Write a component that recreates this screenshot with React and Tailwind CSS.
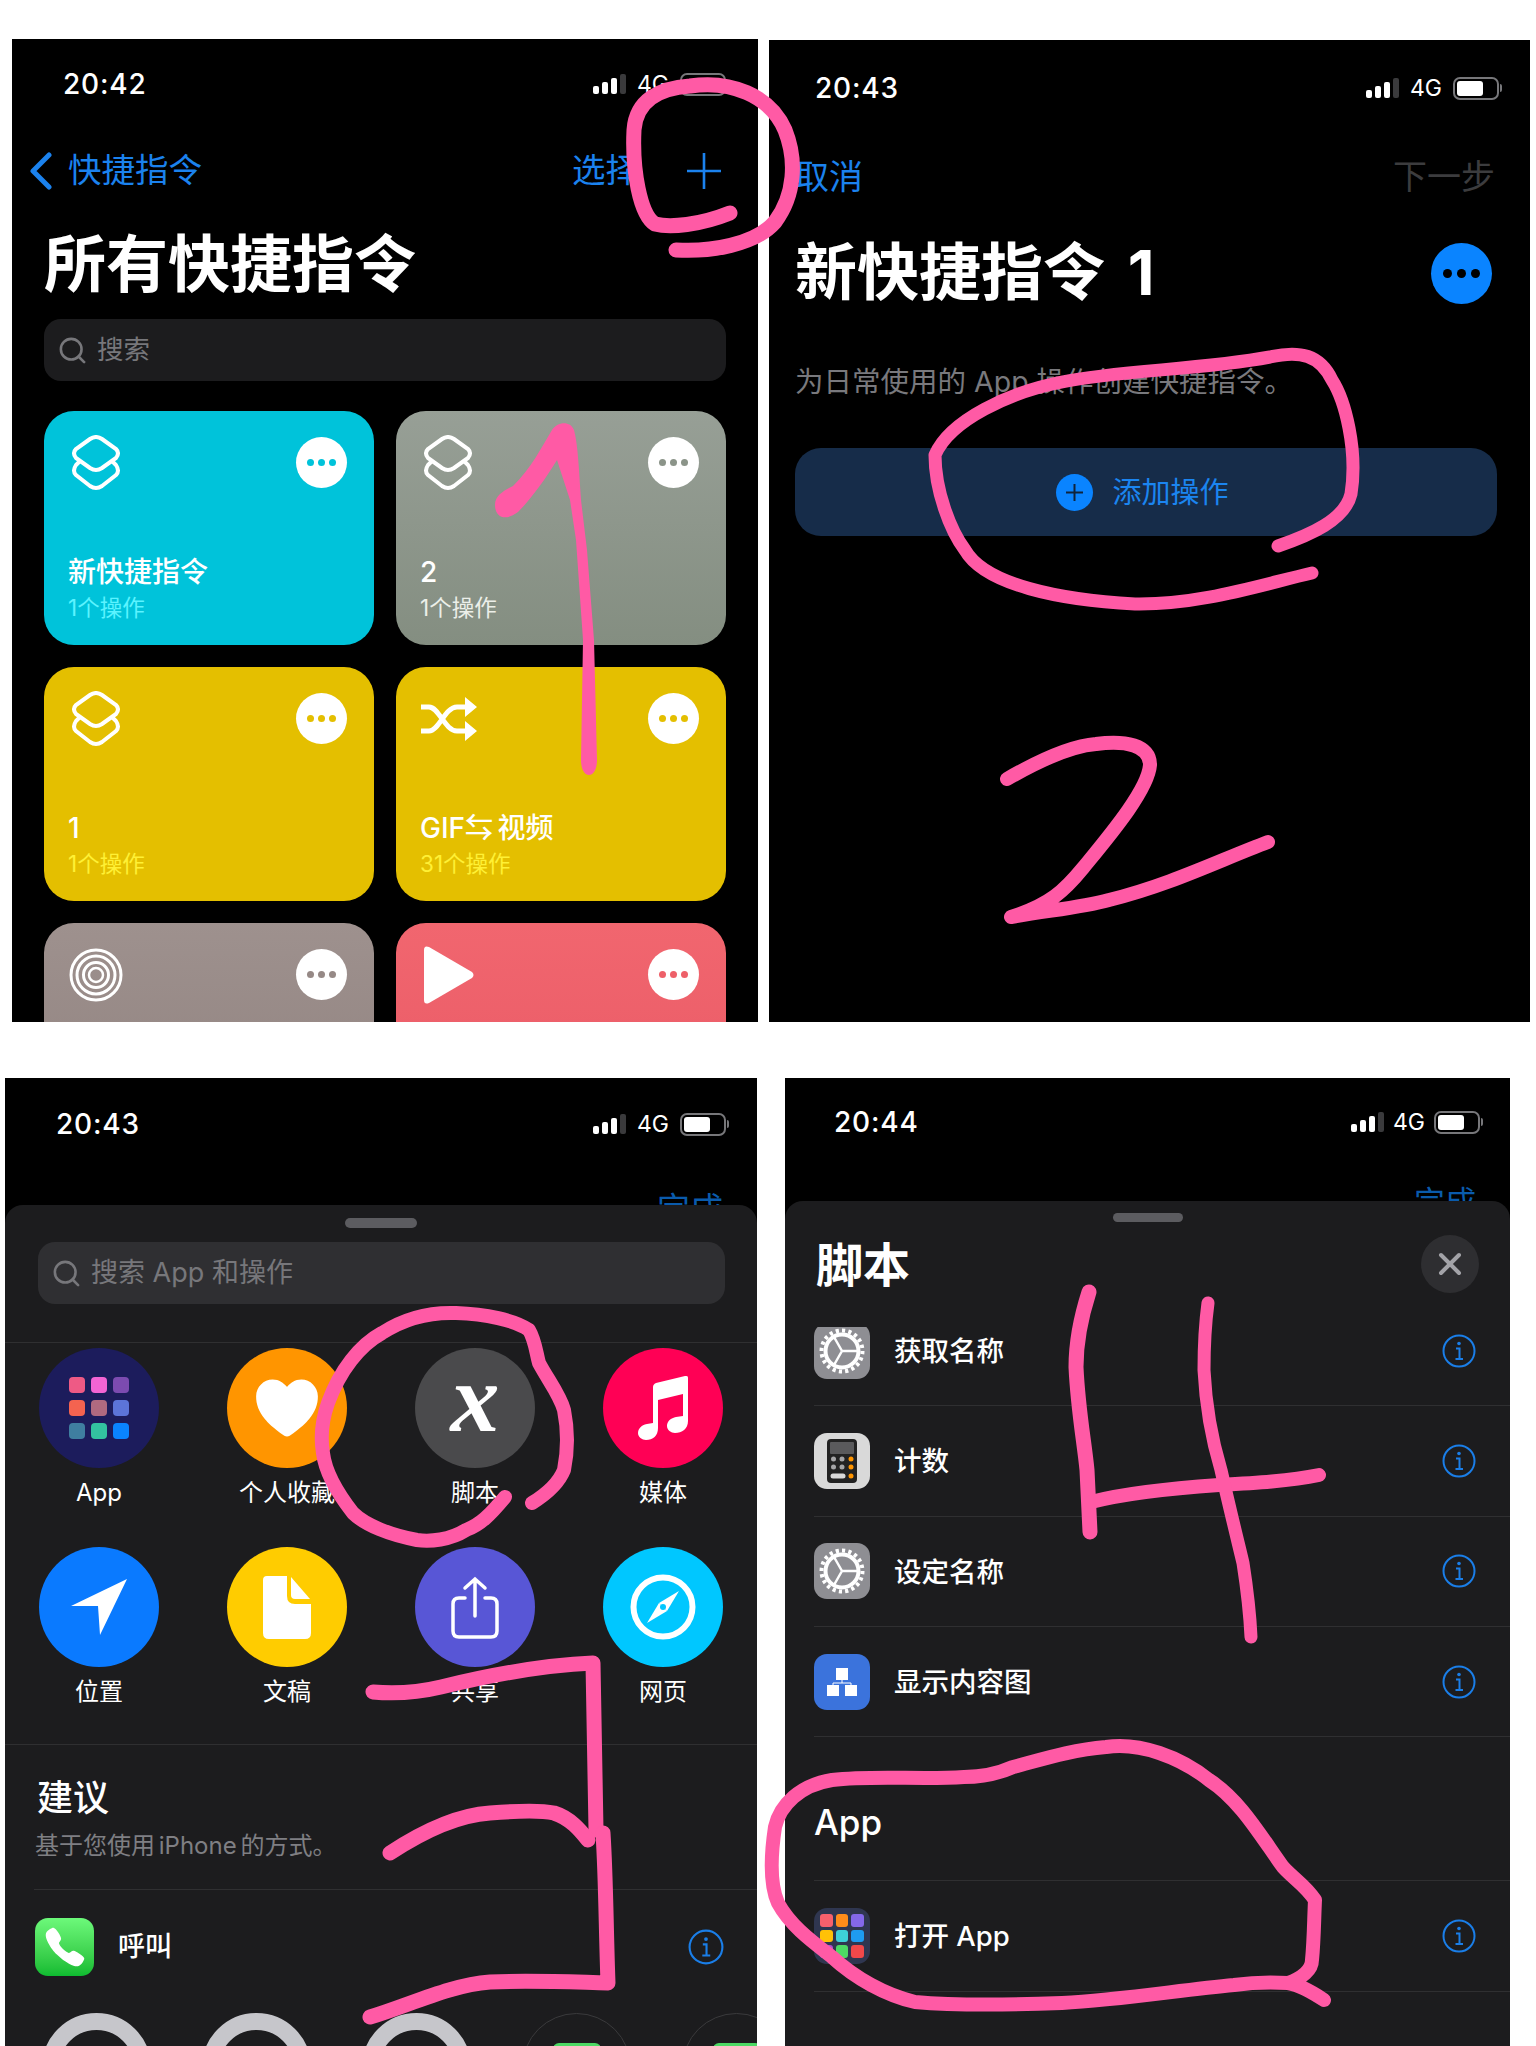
import React from "react";
import { Search } from "lucide-react";
import { IoCall, IoHeart } from "react-icons/io5";

const appGrid = [
  "bg-[#ee5a85]", "bg-[#f264d4]", "bg-[#7c4bb0]",
  "bg-[#f46350]", "bg-[#b06a80]", "bg-[#5c74d8]",
  "bg-[#3f7ea0]", "bg-[#33c3a0]", "bg-[#0a84ff]",
];
const openAppGrid = [
  "bg-[#f8606c]", "bg-[#ff8c1a]", "bg-[#8468ea]",
  "bg-[#ffc107]", "bg-[#3dd0d8]", "bg-[#1e9bf0]",
  "bg-[#b04fd0]", "bg-[#4cd964]", "bg-[#f0484a]",
];

function StatusBar({ time, className, battery = true, gap = "gap-[11px]" }) {
  return (
    <div className={`flex items-center justify-between text-white ${className}`}>
      <span className="text-[28px] leading-none font-medium tracking-[0.8px]">{time}</span>
      <div className={`flex items-center ${gap}`}>
        <div className="flex items-end gap-[3px]">
          <div className="w-[6px] h-[8px] rounded-[2px] bg-white" />
          <div className="w-[6px] h-[12px] rounded-[2px] bg-white" />
          <div className="w-[6px] h-[16px] rounded-[2px] bg-white" />
          <div className="w-[6px] h-[20px] rounded-[2px] bg-[#3a3a3c]" />
        </div>
        <span className="text-[23px] leading-none w-[32px]">4G</span>
        <div className="flex items-center gap-[1px]">
          <div className="w-[46px] h-[23px] rounded-[7px] border-2 border-[#77777a] p-[2px]">
            {battery && <div className="w-[26px] h-full rounded-[3px] bg-white" />}
          </div>
          <div className="w-[2px] h-[8px] rounded-r-[2px] bg-[#77777a]" />
        </div>
      </div>
    </div>
  );
}

function ShortcutGlyph() {
  return (
    <svg width="50" height="56" viewBox="0 0 50 56" fill="none" stroke="white" strokeWidth="4">
      <path d="M19 4 Q25 0 31 4 L45 14 Q49 18 45 23 L31 33 Q25 37 19 33 L5 23 Q1 18 5 14 Z" />
      <path d="M9 26 L5 30 Q1 36 5 40 L19 51 Q25 55 31 51 L45 40 Q49 36 45 30 L41 26" />
    </svg>
  );
}

function ShuffleGlyph() {
  return (
    <svg className="-ml-[2px]" width="56" height="44" viewBox="0 0 56 44" fill="white" stroke="none">
      <path d="M0 10 H8 C18 10 24 34 36 34 H46 M0 34 H8 C18 34 24 10 36 10 H46" fill="none" stroke="white" strokeWidth="5" />
      <path d="M44 0 L56 10 L44 20 Z M44 24 L56 34 L44 44 Z" />
    </svg>
  );
}

function RingsGlyph() {
  return (
    <svg className="-ml-[2px]" width="54" height="54" viewBox="0 0 54 54" fill="none" stroke="white">
      <circle cx="27" cy="27" r="25" strokeWidth="3" />
      <circle cx="27" cy="27" r="19" strokeWidth="3" />
      <circle cx="27" cy="27" r="12.5" strokeWidth="3" />
      <circle cx="27" cy="27" r="7" strokeWidth="2.5" />
    </svg>
  );
}

function PlayGlyph() {
  return (
    <svg width="52" height="58" viewBox="0 0 52 58" fill="white">
      <path d="M1 4 Q1 -1 6 1 L49 26 Q52 29 49 32 L6 57 Q1 59 1 54 Z" />
    </svg>
  );
}

function Dots({ dot }) {
  return (
    <div className="w-[51px] h-[51px] rounded-full bg-white flex items-center justify-center gap-[4px]">
      <div className={`w-[7px] h-[7px] rounded-full ${dot}`} />
      <div className={`w-[7px] h-[7px] rounded-full ${dot}`} />
      <div className={`w-[7px] h-[7px] rounded-full ${dot}`} />
    </div>
  );
}

function Card({ bg, dot, glyph, title, sub, subColor }) {
  return (
    <div className={`h-[234px] rounded-[30px] overflow-hidden ${bg}`}>
      <div className="flex items-center justify-between h-[51px] mt-[26px] pl-[27px] pr-[27px]">
        {glyph}
        <Dots dot={dot} />
      </div>
      <div className="mt-[66px] pl-[24px] h-[36px] flex items-center text-white text-[28px] font-medium leading-none [word-spacing:-3px]">{title}</div>
      <div className={`pl-[24px] h-[36px] flex items-center text-[22.5px] leading-none ${subColor}`}>{sub}</div>
    </div>
  );
}

function PanelOne() {
  return (
    <div className="w-[746px] h-[983px] bg-black overflow-hidden shrink-0">
      <StatusBar time="20:42" battery={false} className="h-[90px] pl-[51px] pr-[29px]" />
      <div className="flex items-center h-[50px] mt-[17px] pl-[17px] text-[33.5px] leading-none text-[#1b82ee]">
        <svg width="24" height="38" viewBox="0 0 24 38" fill="none" stroke="#1b82ee" strokeWidth="5" strokeLinecap="round" strokeLinejoin="round">
          <path d="M20 3 L4 19 L20 35" />
        </svg>
        <span className="ml-[15px]">快捷指令</span>
        <span className="ml-auto">选择</span>
        <svg className="ml-[48px] mr-[37px]" width="34" height="36" viewBox="0 0 34 36" fill="none" stroke="#1b82ee" strokeWidth="2.6">
          <path d="M17 0 V36 M0 18 H34" />
        </svg>
      </div>
      <div className="h-[80px] mt-[29px] pl-[32px] flex items-center text-white text-[62px] font-bold leading-none">所有快捷指令</div>
      <div className="h-[62px] mt-[14px] mx-[32px] rounded-[17px] bg-[#1c1c1e] flex items-center pl-[13px] text-[#77777b] text-[26.5px]">
        <Search size={31} strokeWidth={2} />
        <span className="ml-[9px]">搜索</span>
      </div>
      <div className="grid grid-cols-2 gap-[22px] mt-[30px] mx-[32px]">
        <Card bg="bg-[#00c3da]" dot="bg-[#00c3da]" glyph={<ShortcutGlyph />} title="新快捷指令" sub="1个操作" subColor="text-[#5cf3ff]" />
        <Card bg="bg-linear-to-b from-[#979f96] to-[#848e81]" dot="bg-[#8b9489]" glyph={<ShortcutGlyph />} title="2" sub="1个操作" subColor="text-[#ecefe9]" />
        <Card bg="bg-[#e4bf00]" dot="bg-[#e4bf00]" glyph={<ShortcutGlyph />} title="1" sub="1个操作" subColor="text-[#fff035]" />
        <Card bg="bg-[#e4bf00]" dot="bg-[#e4bf00]" glyph={<ShuffleGlyph />} title="GIF⇆ 视频" sub="31个操作" subColor="text-[#fff035]" />
        <Card bg="bg-linear-to-b from-[#9e918e] to-[#8f817e]" dot="bg-[#968986]" glyph={<RingsGlyph />} title="" sub="" subColor="" />
        <Card bg="bg-linear-to-b from-[#f1666f] to-[#e85864]" dot="bg-[#ee6069]" glyph={<PlayGlyph />} title="" sub="" subColor="" />
      </div>
    </div>
  );
}

function PanelTwo() {
  return (
    <div className="w-[761px] h-[982px] mt-[1px] ml-[11px] bg-black overflow-hidden shrink-0">
      <StatusBar time="20:43" className="h-[96px] pl-[46px] pr-[28px]" />
      <div className="flex items-center justify-between h-[50px] mt-[16px] pl-[26px] pr-[35px] text-[34px] leading-none">
        <span className="text-[#1b82ee]">取消</span>
        <span className="text-[#3c3c3e]">下一步</span>
      </div>
      <div className="flex items-center justify-between h-[80px] mt-[31px] pl-[26px] pr-[38px]">
        <span className="text-white text-[62px] font-bold leading-none [word-spacing:8px]">新快捷指令 1</span>
        <div className="w-[61px] h-[61px] rounded-full bg-[#0a84ff] flex items-center justify-center gap-[5px]">
          <div className="w-[9px] h-[9px] rounded-full bg-black" />
          <div className="w-[9px] h-[9px] rounded-full bg-black" />
          <div className="w-[9px] h-[9px] rounded-full bg-black" />
        </div>
      </div>
      <div className="h-[40px] mt-[49px] pl-[26px] flex items-center text-[#79797d] text-[28.5px] leading-none">为日常使用的 App 操作创建快捷指令。</div>
      <div className="h-[88px] mt-[46px] ml-[26px] mr-[33px] rounded-[26px] bg-[#162c49] flex items-center justify-center gap-[19px] pr-[7px]">
        <div className="w-[37px] h-[37px] rounded-full bg-[#0a84ff] flex items-center justify-center">
          <svg width="19" height="19" viewBox="0 0 19 19" fill="none" stroke="#10243c" strokeWidth="2">
            <path d="M9.5 1 V18 M1 9.5 H18" />
          </svg>
        </div>
        <span className="text-[#1b85f0] text-[29px] leading-none">添加操作</span>
      </div>
    </div>
  );
}

function Bubble({ bg, label, children }) {
  return (
    <div className="flex flex-col items-center">
      <div className={`w-[120px] h-[120px] rounded-full flex items-center justify-center ${bg}`}>{children}</div>
      <div className="h-[40px] mt-[5px] flex items-center text-[24px] text-white leading-none">{label}</div>
    </div>
  );
}

function InfoIcon({ size = 34 }) {
  return (
    <svg width={size} height={size} viewBox="0 0 34 34" fill="none" stroke="#1a7ee8">
      <circle cx="17" cy="17" r="15.5" strokeWidth="2" />
      <circle cx="17" cy="9.5" r="1.8" fill="#1a7ee8" stroke="none" />
      <path d="M14 14.5 H17.5 V25 M13.5 25 H21" strokeWidth="2" />
    </svg>
  );
}

function PanelThree() {
  return (
    <div className="w-[752px] h-[968px] ml-[5px] bg-black overflow-hidden shrink-0">
      <StatusBar time="20:43" className="h-[92px] pl-[51px] pr-[28px]" />
      <div className="h-[35px] overflow-hidden flex justify-end pr-[34px] pt-[23px] text-[33px] leading-none text-[#0a5bac]">完成</div>
      <div className="h-[841px] rounded-t-[18px] bg-[#1c1c1e] text-white overflow-hidden">
        <div className="w-[72px] h-[10px] mx-auto mt-[13px] rounded-full bg-[#5c5c60]" />
        <div className="h-[62px] mt-[14px] ml-[33px] mr-[32px] rounded-[17px] bg-[#2f2f32] flex items-center pl-[13px] text-[#77777b] text-[27px]">
          <Search size={31} strokeWidth={2} />
          <span className="ml-[9px]">搜索 App 和操作</span>
        </div>
        <div className="mt-[38px] border-t border-[#2f2f31] pt-[5px] grid grid-cols-4 gap-y-[34px]">
          <Bubble bg="bg-[#1c1c5c]" label="App">
            <div className="grid grid-cols-3 gap-x-[6px] gap-y-[7px]">
              {appGrid.map(c => <div key={c} className={`w-[16px] h-[16px] rounded-[4px] ${c}`} />)}
            </div>
          </Bubble>
          <Bubble bg="bg-[#ff9500]" label="个人收藏"><IoHeart size={76} color="white" /></Bubble>
          <Bubble bg="bg-[#4a4a4c]" label="脚本">
            <span className="font-['Liberation_Serif',serif] italic font-bold text-[98px] leading-none -mt-[20px]">x</span>
          </Bubble>
          <Bubble bg="bg-[#ff0055]" label="媒体">
            <svg width="51" height="64" viewBox="0 0 51 64" fill="white">
              <path d="M50 2 C50 0 49 0 47 0 L18 7 C16 8 15 9 15 11 V47 L9 48 C3 49 0 53 0 57 C0 61 4 64 8 64 C15 64 20 60 20 52 V24 L45 18 V40 L38 41 C33 42 29 45 29 50 C29 54 33 57 37 57 C44 57 50 53 50 45 Z" />
            </svg>
          </Bubble>
          <Bubble bg="bg-[#0a7aff]" label="位置">
            <svg width="62" height="62" viewBox="28 33 62 62" fill="white">
              <path d="M87 36 L31 63 L58 63 L60 92 Z" />
            </svg>
          </Bubble>
          <Bubble bg="bg-[#ffcc00]" label="文稿">
            <svg width="48" height="63" viewBox="0 0 48 63" fill="white">
              <path d="M4 0 H24 V20 Q24 28 32 28 H48 V57 Q48 63 42 63 H6 Q0 63 0 57 V4 Q0 0 4 0 Z" />
              <path d="M28 1 L47 23 H32 Q28 23 28 19 Z" />
            </svg>
          </Bubble>
          <Bubble bg="bg-[#5856d6]" label="共享">
            <svg width="48" height="63" viewBox="0 0 48 63" fill="none" stroke="white" strokeWidth="3.5" strokeLinecap="round">
              <path d="M14 22 H8 Q2 22 2 28 V55 Q2 61 8 61 H40 Q46 61 46 55 V28 Q46 22 40 22 H34" />
              <path d="M24 3 V40 M14 12 L24 3 L34 12" />
            </svg>
          </Bubble>
          <Bubble bg="bg-[#00c7ff]" label="网页">
            <svg width="66" height="66" viewBox="0 0 66 66" fill="none">
              <circle cx="33" cy="33" r="29.5" stroke="white" strokeWidth="6" />
              <path d="M49 17 L37 37 L29 29 Z" fill="white" />
              <path d="M17 49 L29 29 L37 37 Z" fill="white" />
              <circle cx="33" cy="33" r="3" fill="#00c7ff" />
            </svg>
          </Bubble>
        </div>
        <div className="mt-[32px] border-t border-[#2f2f31] pt-[33px]">
          <div className="h-[40px] pl-[32px] flex items-center text-[36px] font-medium leading-none">建议</div>
          <div className="h-[36px] mt-[10px] pl-[30px] flex items-center text-[24px] text-[#7f7f83] leading-none [word-spacing:-3px]">基于您使用 iPhone 的方式。</div>
        </div>
        <div className="ml-[29px] mt-[25px] border-t border-[#2f2f31] h-[114px] flex items-center">
          <div className="w-[59px] h-[58px] ml-[1px] rounded-[13px] bg-linear-to-b from-[#6cf97a] to-[#0dbb30] flex items-center justify-center">
            <IoCall size={44} color="white" />
          </div>
          <span className="ml-[24px] text-[27px] font-medium leading-none">呼叫</span>
          <div className="ml-auto mr-[33px]"><InfoIcon size={36} /></div>
        </div>
        <div className="flex gap-[51px] ml-[37px] mt-[10px] w-[800px]">
          <div className="w-[109px] h-[109px] shrink-0 rounded-full border-[17px] border-[#c6c6cb]" />
          <div className="w-[109px] h-[109px] shrink-0 rounded-full border-[17px] border-[#c6c6cb]" />
          <div className="w-[109px] h-[109px] shrink-0 rounded-full border-[17px] border-[#c6c6cb]" />
          <div className="w-[109px] h-[109px] shrink-0 rounded-full border border-[#3a3a3c] flex justify-center pt-[29px]">
            <div className="w-[48px] h-[20px] rounded-t-[6px] bg-[#4cd964]" />
          </div>
          <div className="w-[109px] h-[109px] shrink-0 rounded-full border border-[#3a3a3c] flex justify-center pt-[29px]">
            <div className="w-[48px] h-[20px] rounded-t-[6px] bg-[#4cd964]" />
          </div>
        </div>
      </div>
    </div>
  );
}

function GearIcon() {
  return (
    <div className="w-[56px] h-[56px] rounded-[13px] bg-[#8e8e93] flex items-center justify-center">
      <svg width="46" height="46" viewBox="0 0 46 46" fill="none" stroke="white">
        <circle cx="23" cy="23" r="20.5" strokeWidth="4" strokeDasharray="3.2 3.2" />
        <circle cx="23" cy="23" r="16.5" strokeWidth="4" />
        <path d="M23 23 H38 M23 23 L15 9 M23 23 L15 37" strokeWidth="2.5" />
      </svg>
    </div>
  );
}

function CalculatorIcon() {
  return (
    <div className="w-[56px] h-[56px] rounded-[13px] bg-[#d9d9d9] flex items-center justify-center">
      <svg width="30" height="44" viewBox="0 0 30 44" fill="none">
        <rect width="30" height="44" rx="4" fill="#222" />
        <rect x="3" y="3" width="24" height="12" rx="1" fill="#5a5a5c" />
        <g fill="#a5a5a7">
          <circle cx="6.5" cy="20" r="2.5" /><circle cx="15" cy="20" r="2.5" />
          <circle cx="6.5" cy="28" r="2.5" /><circle cx="15" cy="28" r="2.5" />
        </g>
        <g fill="#ff9500">
          <circle cx="24" cy="20" r="2.5" /><circle cx="24" cy="28" r="2.5" /><circle cx="24" cy="37" r="2.5" />
        </g>
        <rect x="3.5" y="34.5" width="15" height="5" rx="2.5" fill="#d9d9d9" />
      </svg>
    </div>
  );
}

function GraphIcon() {
  return (
    <div className="w-[56px] h-[56px] rounded-[13px] bg-[#3b73dc] flex items-center justify-center">
      <svg width="30" height="28" viewBox="0 0 30 28" fill="white">
        <rect x="9" y="0" width="12" height="12" />
        <rect x="0" y="17" width="12" height="11" />
        <rect x="18" y="17" width="12" height="11" />
        <path d="M15 12 V15 M6 17 V15 H24 V17" fill="none" stroke="white" strokeWidth="1" />
      </svg>
    </div>
  );
}

function ActionRow({ icon, label }) {
  return (
    <div className="h-[110.33px] ml-[29px] pr-[34px] border-b border-[#2f2f31] flex items-center">
      {icon}
      <span className="ml-[24px] pt-[2px] text-[27.5px] font-medium leading-none text-white">{label}</span>
      <div className="ml-auto"><InfoIcon /></div>
    </div>
  );
}

function PanelFour() {
  return (
    <div className="w-[725px] h-[968px] ml-[28px] bg-black overflow-hidden shrink-0">
      <StatusBar time="20:44" className="h-[88px] pl-[49px] pr-[27px]" gap="gap-[9px]" />
      <div className="h-[35px] overflow-hidden flex justify-end pr-[34px] pt-[20px] text-[31px] leading-none text-[#0a5bac]">完成</div>
      <div className="h-[845px] rounded-t-[18px] bg-[#1c1c1e] overflow-hidden">
        <div className="w-[70px] h-[9px] mt-[12px] ml-[328px] rounded-full bg-[#5c5c60]" />
        <div className="h-[60px] mt-[12px] pl-[31px] pr-[31px] flex items-center justify-between">
          <span className="text-white text-[47px] font-bold leading-none">脚本</span>
          <div className="w-[58px] h-[58px] rounded-full bg-[#2e2e31] flex items-center justify-center">
            <svg width="24" height="24" viewBox="0 0 24 24" stroke="#a3a3a8" strokeWidth="4" strokeLinecap="round">
              <path d="M3 3 L21 21 M21 3 L3 21" />
            </svg>
          </div>
        </div>
        <div className="mt-[33px] h-[666px] overflow-hidden">
          <div className="-mt-[31px]">
            <ActionRow icon={<GearIcon />} label="获取名称" />
            <ActionRow icon={<CalculatorIcon />} label="计数" />
            <ActionRow icon={<GearIcon />} label="设定名称" />
            <ActionRow icon={<GraphIcon />} label="显示内容图" />
            <div className="h-[144px] ml-[29px] border-b border-[#2f2f31] pt-[65px] text-[35px] font-medium leading-[40px] text-white">App</div>
            <ActionRow
              icon={
                <div className="w-[56px] h-[56px] rounded-[13px] bg-[#2f3650] grid grid-cols-3 gap-[3px] p-[6px]">
                  {openAppGrid.map(c => <div key={c} className={`rounded-[3px] ${c}`} />)}
                </div>
              }
              label="打开 App"
            />
          </div>
        </div>
      </div>
    </div>
  );
}

// hand-drawn annotations, in page coordinates
function Scribbles() {
  const thick = "M730 213 C700 225 670 228 655 224 C640 215 632 170 634 130 C636 100 660 88 690 86 C730 80 770 95 785 130 C797 160 795 195 775 222 C755 245 710 252 676 250";
  const oval = "M1278 546 C1310 535 1345 520 1351 494 C1358 450 1345 400 1332 380 C1320 355 1300 350 1270 357 C1200 370 1120 370 1062 382 C1010 392 950 420 935 455 C935 490 950 530 965 550 C985 585 1060 600 1135 604 C1200 605 1260 585 1312 573";
  const two = "M1007 779 C1040 760 1070 746 1096 744 C1125 740 1150 745 1150 765 C1148 790 1110 835 1083 868 C1065 890 1050 905 1011 917 C1050 910 1080 908 1109 900 C1170 885 1220 860 1268 842";
  const scriptRing = "M505 1497 C490 1515 480 1525 466 1530 C450 1540 430 1542 417 1540 C390 1535 365 1525 353 1513 C335 1490 325 1470 323 1453 C320 1435 322 1420 328 1403 C340 1370 360 1345 382 1333 C405 1318 430 1312 456 1313 C485 1314 515 1320 529 1330 C535 1340 536 1352 539 1363 C548 1380 560 1395 564 1410 C568 1430 568 1450 564 1470 C558 1485 545 1495 532 1503";
  const three1 = "M373 1692 C395 1694 420 1692 441 1687 C490 1675 545 1665 593 1663 L596 1830";
  const three2 = "M390 1853 C425 1830 460 1815 490 1813 C515 1811 540 1810 554 1813 C570 1818 580 1830 588 1840";
  const three3 = "M603 1833 C606 1880 606 1930 608 1983 C570 1982 530 1980 490 1982 C450 1985 410 2005 370 2017";
  const fourLeft = "M1089 1292 C1080 1320 1076 1345 1076 1367 C1078 1410 1084 1440 1087 1470 L1090 1532";
  const fourCross = "M1091 1502 C1130 1492 1175 1488 1219 1485 C1255 1483 1290 1481 1319 1475";
  const fourRight = "M1208 1303 C1205 1325 1204 1345 1204 1370 C1206 1410 1212 1440 1221 1470 C1230 1510 1240 1550 1243 1563 C1248 1595 1250 1615 1251 1637";
  const appRing = "M1324 2000 C1312 1992 1300 1985 1288 1983 C1302 1978 1312 1970 1312 1960 C1314 1940 1314 1920 1315 1900 C1305 1885 1295 1880 1283 1867 C1260 1835 1240 1800 1209 1780 C1180 1757 1140 1742 1106 1747 C1070 1750 1040 1760 1013 1767 C995 1775 980 1777 964 1777 C920 1780 875 1775 832 1780 C800 1785 780 1805 775 1827 C770 1860 770 1885 778 1903 C790 1925 810 1940 832 1957 C855 1978 885 1995 915 2002 C960 2006 1010 2005 1062 2003 C1120 2000 1180 1990 1234 1985 C1255 1982 1272 1982 1288 1983";
  const one = "M495 505 C495 495 505 490 513 486 C530 470 543 445 552 430 C557 422 570 420 574 430 C578 445 579 470 581 500 L587 550 L594 640 L597 760 C597 780 581 780 581 760 L583 640 L576 540 L570 500 L557 460 C545 480 530 500 518 512 C505 522 495 517 495 505 Z";
  return (
    <svg className="absolute inset-0 pointer-events-none" width="1536" height="2046" viewBox="0 0 1536 2046" fill="none" stroke="#ff5aa5" strokeLinecap="round" strokeLinejoin="round">
      <path d={thick} strokeWidth="15" />
      <path d={one} fill="#ff5aa5" stroke="none" />
      <path d={oval} strokeWidth="13" />
      <path d={two} strokeWidth="14" />
      <path d={scriptRing} strokeWidth="14" />
      <path d={three1} strokeWidth="15" />
      <path d={three2} strokeWidth="15" />
      <path d={three3} strokeWidth="15" />
      <path d={fourLeft} strokeWidth="15" />
      <path d={fourCross} strokeWidth="14" />
      <path d={fourRight} strokeWidth="13" />
      <path d={appRing} strokeWidth="14" />
    </svg>
  );
}

export default function App() {
  return (
    <div className="relative w-[1536px] h-[2046px] bg-white overflow-hidden font-['Inter','Noto_Sans_CJK_SC',sans-serif]">
      <div className="flex pt-[39px] pl-[12px]">
        <PanelOne />
        <PanelTwo />
      </div>
      <div className="flex mt-[56px]">
        <PanelThree />
        <PanelFour />
      </div>
      <Scribbles />
    </div>
  );
}
